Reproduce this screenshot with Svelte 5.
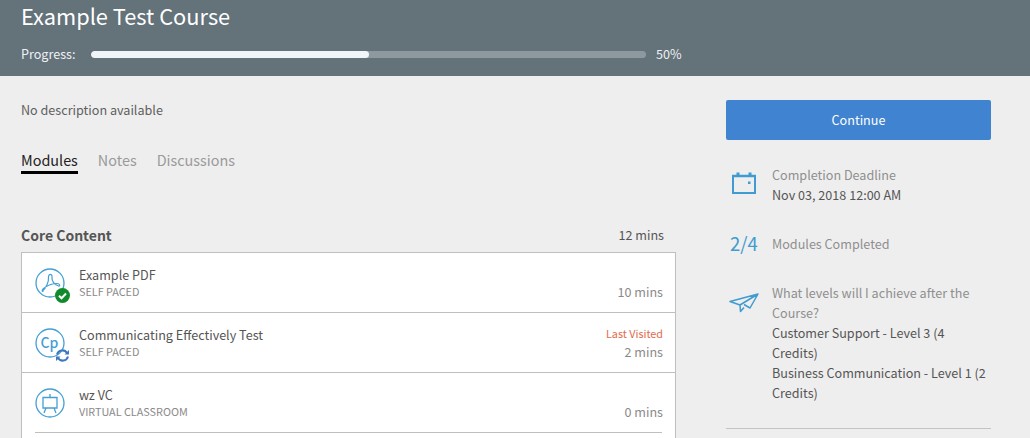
<script>
	const modules = [
		{ title: 'Example PDF', kind: 'SELF PACED', mins: '10 mins', icon: 'pdf', status: 'done' },
		{ title: 'Communicating Effectively Test', kind: 'SELF PACED', mins: '2 mins', icon: 'cp', status: 'sync', visited: true },
		{ title: 'wz VC', kind: 'VIRTUAL CLASSROOM', mins: '0 mins', icon: 'vc' }
	];
</script>

<div class="page">
	<header class="hero">
		<h1>Example Test Course</h1>
		<div class="progress">
			<span class="progress-label">Progress:</span>
			<div class="track"><div class="fill" style="width: 50%"></div></div>
			<span class="progress-value">50%</span>
		</div>
	</header>

	<div class="body">
		<main class="content">
			<p class="description">No description available</p>
			<nav class="tabs">
				<span class="tab active">Modules</span>
				<span class="tab">Notes</span>
				<span class="tab">Discussions</span>
			</nav>

			<div class="section-head">
				<h2>Core Content</h2>
				<span>12 mins</span>
			</div>

			<ul class="modules">
				{#each modules as mod}
					<li class="module">
						<div class="module-icon">
							<svg width="30" height="30" viewBox="0 0 30 30" fill="none" stroke="#459fd4" stroke-width="1.300">
								<circle cx="15" cy="15" r="14" />
								{#if mod.icon === 'pdf'}
									<path stroke-width="1.200" d="M7.500 23C11 20 14 14 13.500 9 13.300 5.500 17.500 5.500 17 9 16.500 13 19.500 17 23.500 18 25.500 18.500 25 15.500 22 15.500 17 15.500 11 18.500 8.500 20.500 6.500 22.500 7 24 8.500 23" />
								{:else if mod.icon === 'cp'}
									<text x="14.500" y="20" class="cp" text-anchor="middle">Cp</text>
								{:else}
									<path d="M8 9.500h14V20H8zM15 6v3.500M11 20l-2 5M19 20l2 5" />
								{/if}
							</svg>
							{#if mod.status === 'done'}
								<svg class="badge" width="15" height="15" viewBox="0 0 15 15">
									<circle cx="7.500" cy="7.500" r="7.500" fill="#118a2c" />
									<path d="M4 7.700l2.500 2.500L11 5.500" fill="none" stroke="#fff" stroke-width="2" />
								</svg>
							{:else if mod.status === 'sync'}
								<svg class="badge" width="15" height="15" viewBox="0 0 15 15" fill="none" stroke="#3f78c0" stroke-width="2">
									<path d="M2 6.500a5.500 5.500 0 0 1 10-1.500" />
									<path d="M13 8.500a5.500 5.500 0 0 1-10 1.500" />
									<path fill="#3f78c0" stroke="none" d="M14 2v4.500H9.500zM1 13V8.500h4.500z" />
								</svg>
							{/if}
						</div>
						<div class="module-text">
							<div class="module-title">{mod.title}</div>
							<div class="module-kind">{mod.kind}</div>
						</div>
						<div class="module-meta">
							{#if mod.visited}<div class="visited">Last Visited</div>{/if}
							<div class="mins">{mod.mins}</div>
						</div>
					</li>
				{/each}
				<li class="next-row"><div class="next-rule"></div></li>
			</ul>
		</main>

		<aside class="side">
			<button class="continue">Continue</button>

			<div class="fact deadline">
				<div class="fact-icon">
					<svg width="24" height="22" viewBox="0 0 24 22" fill="none" stroke="#3f9bd0" stroke-width="2">
						<path d="M1 4h22v17H1z" />
						<path stroke-width="2.500" d="M0 4h24" />
						<path stroke-width="3" d="M6 0.500v4M18 0.500v4" />
						<rect x="16" y="9.500" width="2.500" height="2.500" fill="#3f9bd0" stroke="none" />
					</svg>
				</div>
				<div>
					<div class="fact-label">Completion Deadline</div>
					<div class="fact-value">Nov 03, 2018 12:00 AM</div>
				</div>
			</div>

			<div class="fact modules-done">
				<div class="fact-icon count">2/4</div>
				<div class="fact-label">Modules Completed</div>
			</div>

			<div class="fact levels">
				<div class="fact-icon">
					<svg width="30" height="20" viewBox="0 0 30 20" fill="none" stroke="#3f9bd0" stroke-width="1.500" stroke-linejoin="round">
						<path d="M29 1L1 8.500 11 12 29 1 21 15 15 11.500M11 12l.500 6.500 3.500-4" />
					</svg>
				</div>
				<div>
					<div class="fact-label">What levels will I achieve after the Course?</div>
					<div class="fact-value">Customer Support - Level 3 (4 Credits)</div>
					<div class="fact-value">Business Communication - Level 1 (2 Credits)</div>
				</div>
			</div>

			<hr />
		</aside>
	</div>
</div>

<style>
	:global(body) {
		margin: 0;
		overflow: hidden;
		background: #eeeeee;
	}

	.page {
		height: 438px;
		overflow: hidden;
		font-family: 'Noto Sans CJK SC', 'Noto Sans', sans-serif;
		color: #555;
	}

	.hero {
		height: 76px;
		box-sizing: border-box;
		background: #64727a;
		padding: 0 21px;
		color: #fff;
	}

	.hero h1 {
		margin: 0;
		font-size: 21.800px;
		line-height: 32px;
		font-weight: 400;
	}

	.progress {
		display: flex;
		align-items: center;
		margin-top: 13px;
		font-size: 12.600px;
		line-height: 18px;
		color: #eef1f3;
	}

	.progress-label {
		width: 70px;
	}

	.track {
		width: 555px;
		height: 7px;
		border-radius: 4px;
		background: #8e999f;
		overflow: hidden;
	}

	.fill {
		height: 100%;
		border-radius: 4px;
		background: #f2f5f8;
	}

	.progress-value {
		margin-left: 10px;
	}

	.body {
		display: flex;
	}

	.content {
		width: 655px;
		margin-left: 21px;
		flex: none;
	}

	.description {
		margin: 24px 0 0;
		font-size: 12.600px;
		line-height: 20px;
		color: #5f5f5f;
	}

	.tabs {
		display: flex;
		gap: 20px;
		margin-top: 29px;
		font-size: 14.400px;
		line-height: 22px;
	}

	.tab {
		color: #9a9a9a;
	}

	.tab.active {
		color: #222;
		border-bottom: 3px solid #000;
	}

	.section-head {
		display: flex;
		justify-content: space-between;
		align-items: center;
		margin: 51px 12px 0 0;
		font-size: 12.600px;
		line-height: 20px;
		color: #555;
	}

	.section-head h2 {
		margin: 0;
		font-size: 14px;
		font-weight: 600;
	}

	.modules {
		list-style: none;
		margin: 7px 0 0;
		padding: 0;
		background: #fff;
		border: 1px solid #bfbfbf;
		border-bottom: none;
	}

	.module {
		display: flex;
		height: 59px;
		border-bottom: 1px solid #bfbfbf;
	}

	.module:nth-child(3) {
		border-bottom-color: transparent;
	}

	.module-icon {
		position: relative;
		width: 30px;
		height: 30px;
		margin: 15px 0 0 13px;
	}

	.module-icon svg {
		display: block;
	}

	.cp {
		font-size: 14px;
		font-weight: 500;
		fill: #459fd4;
		stroke: none;
	}

	.badge {
		position: absolute;
		right: -5px;
		bottom: -5px;
	}

	.module-text {
		flex: 1;
		margin: 12px 0 0 14px;
	}

	.module-title {
		font-size: 12.600px;
		line-height: 20px;
		color: #555;
	}

	.module-kind {
		font-size: 10.800px;
		line-height: 14px;
		color: #8a8a8a;
		margin-top: -1px;
	}

	.module-meta {
		display: flex;
		flex-direction: column;
		justify-content: flex-end;
		align-items: flex-end;
		padding: 0 12px 11px 0;
	}

	.visited {
		font-size: 10.800px;
		line-height: 16px;
		color: #e4694d;
		margin-bottom: 2px;
	}

	.mins {
		font-size: 12.600px;
		line-height: 18px;
		color: #8a8a8a;
	}

	.next-row {
		height: 20px;
		margin-top: -1px;
	}

	.next-rule {
		height: 1px;
		margin: 0 13px;
		background: #bfbfbf;
	}

	.side {
		width: 265px;
		margin-left: 50px;
		padding-top: 24px;
		flex: none;
	}

	.continue {
		display: block;
		width: 100%;
		height: 40px;
		padding: 0 0 2px;
		background: #4083d0;
		border: none;
		border-radius: 2px;
		color: #fff;
		font: inherit;
		font-size: 12.600px;
	}

	.fact {
		display: flex;
		font-size: 12.600px;
		line-height: 20px;
	}

	.fact-icon {
		width: 46px;
		flex: none;
	}

	.fact-label {
		color: #8f8f8f;
	}

	.fact-value {
		color: #555;
	}

	.deadline {
		margin-top: 25px;
	}

	.deadline .fact-icon {
		padding: 7px 0 0 6px;
		box-sizing: border-box;
	}

	.modules-done {
		margin-top: 29px;
	}

	.count {
		font-size: 18.500px;
		line-height: 18px;
		color: #3f9bd0;
		padding-left: 4px;
		box-sizing: border-box;
	}

	.levels {
		margin-top: 29px;
	}

	.levels .fact-icon {
		padding: 10px 0 0 3px;
		box-sizing: border-box;
	}

	hr {
		border: none;
		border-top: 1px solid #c4c4c4;
		margin: 25px 0 0;
	}
</style>
